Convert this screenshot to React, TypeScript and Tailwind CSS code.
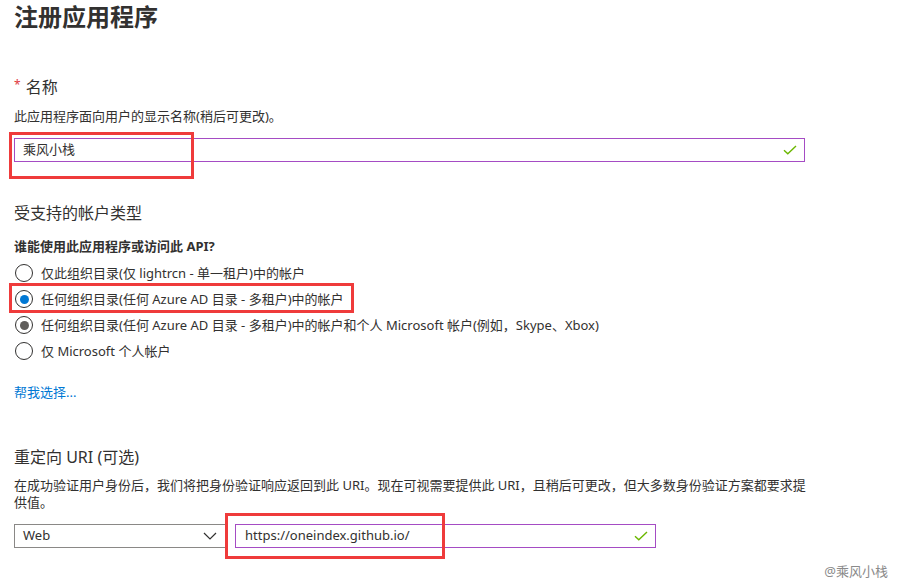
import React from "react";

// Font stack: Latin first, then CJK fallback
const font = "font-['Noto_Sans','Noto_Sans_CJK_SC',sans-serif]";

// Green check shown inside a validated input
function Check() {
  return (
    <svg width="14" height="10" viewBox="0 0 14 10" fill="none">
      <path d="M1 5.2 L4.8 8.8 L13 1" stroke="#6bb700" strokeWidth="1.4" />
    </svg>
  );
}

// Radio button with three looks: empty, selected (blue) and selected (grey)
function Radio({ state, label }: { state: "off" | "on" | "grey"; label: string }) {
  return (
    <div className="flex items-center h-[26px] gap-[8px]">
      <span className="ml-[1px] w-[18px] h-[18px] rounded-full border border-[#323130] flex items-center justify-center shrink-0">
        {state === "on" && <span className="w-[9px] h-[9px] rounded-full bg-[#0078d4]" />}
        {state === "grey" && <span className="w-[9px] h-[9px] rounded-full bg-[#605e5c]" />}
      </span>
      <span className="text-[13px] leading-[18px] text-[#323130]">{label}</span>
    </div>
  );
}

export default function App() {
  return (
    <div className={`${font} relative w-[900px] h-[588px] bg-white overflow-hidden pl-[14px] pt-[2px] text-[#323130]`}>
      {/* Page title */}
      <h1 className="text-[24px] leading-[30px] font-bold">注册应用程序</h1>

      {/* Name */}
      <div className="mt-[43px] flex items-start h-[24px]">
        <span className="text-[#e0393e] text-[12px] leading-[14px] mt-[3px] mr-[5px]">*</span>
        <span className="text-[16px] leading-[24px]">名称</span>
      </div>
      <p className="mt-[8px] text-[13px] leading-[18px]">此应用程序面向用户的显示名称(稍后可更改)。</p>
      <div className="relative mt-[13px] w-[791px] h-[24px] border border-[#a54cc4] flex items-center justify-between pl-[8px] pr-[7px]">
        <span className="text-[13px]">乘风小栈</span>
        <Check />
        <div className="absolute left-[-6px] top-[-7px] w-[185px] h-[47px] border-[3px] border-[#ef3b3b]" />
      </div>

      {/* Account types */}
      <h2 className="mt-[39px] text-[16px] leading-[24px]">受支持的帐户类型</h2>
      <p className="mt-[12px] text-[13px] leading-[18px] font-bold">谁能使用此应用程序或访问此 API?</p>
      <div className="mt-[5px] flex flex-col">
        <Radio state="off" label="仅此组织目录(仅 lightrcn - 单一租户)中的帐户" />
        <div className="relative">
          <Radio state="on" label="任何组织目录(任何 Azure AD 目录 - 多租户)中的帐户" />
          <div className="absolute left-[-5px] top-[-3px] w-[345px] h-[30px] border-[3px] border-[#ef3b3b]" />
        </div>
        <Radio state="grey" label="任何组织目录(任何 Azure AD 目录 - 多租户)中的帐户和个人 Microsoft 帐户(例如，Skype、Xbox)" />
        <Radio state="off" label="仅 Microsoft 个人帐户" />
      </div>
      <a className="block mt-[19px] text-[13px] leading-[18px] text-[#0078d4]">帮我选择...</a>

      {/* Redirect URI */}
      <h2 className="mt-[44px] text-[16px] leading-[24px]">重定向 URI (可选)</h2>
      <p className="mt-[8px] text-[13px] leading-[17px] w-[800px]">
        在成功验证用户身份后，我们将把身份验证响应返回到此 URI。现在可视需要提供此 URI，且稍后可更改，但大多数身份验证方案都要求提
        <br />
        供值。
      </p>
      <div className="mt-[13px] flex gap-[9px]">
        <div className="w-[212px] h-[24px] border border-[#8a8886] flex items-center justify-between pl-[8px] pr-[8px]">
          <span className="text-[13px]">Web</span>
          <svg width="14" height="8" viewBox="0 0 14 8" fill="none">
            <path d="M1 1 L7 7 L13 1" stroke="#323130" strokeWidth="1.2" />
          </svg>
        </div>
        <div className="relative w-[421px] h-[24px] border border-[#a54cc4] flex items-center justify-between pl-[9px] pr-[7px]">
          <span className="text-[13px]">https://oneindex.github.io/</span>
          <Check />
          <div className="absolute left-[-11px] top-[-12px] w-[220px] h-[46px] border-[3px] border-[#ef3b3b]" />
        </div>
      </div>

      {/* Watermark */}
      <span className="absolute right-[12px] bottom-[8px] text-[13px] leading-[18px] text-[#8a8a8a]">@乘风小栈</span>
    </div>
  );
}
